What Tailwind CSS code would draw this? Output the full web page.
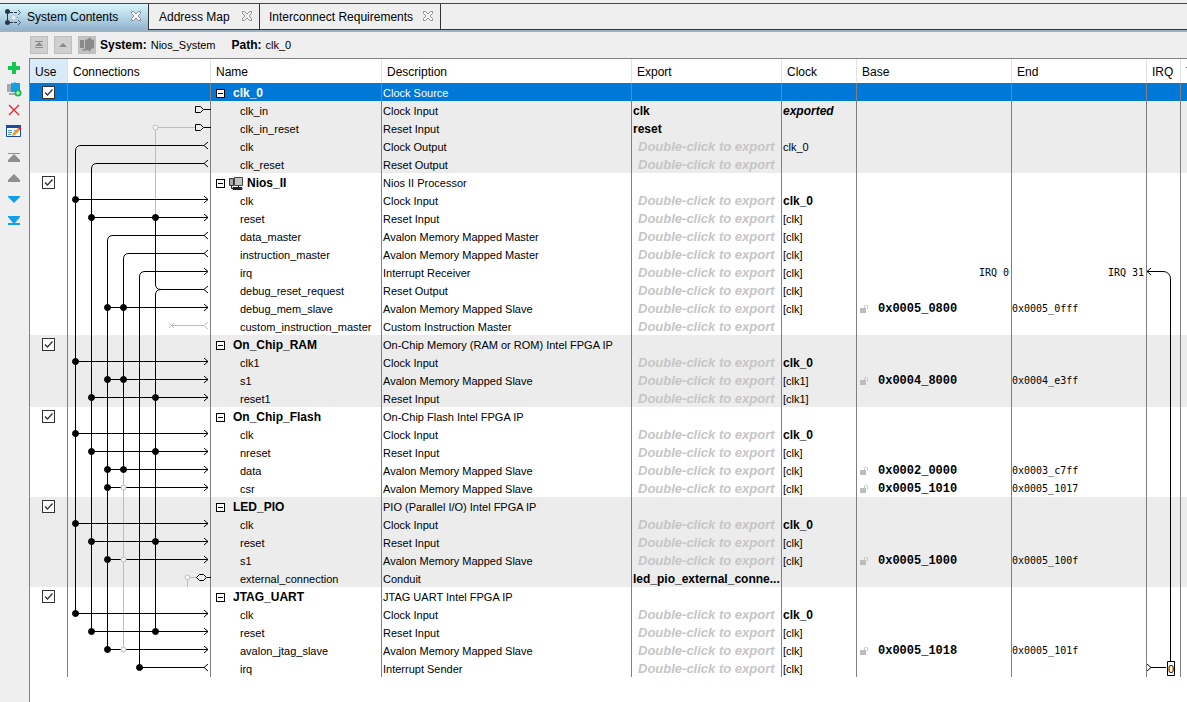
<!DOCTYPE html>
<html lang="en">
<head>
    <meta charset="UTF-8">
    <meta name="viewport" content="width=device-width, initial-scale=1.0">
    <title>System Contents - Nios_System</title>
    <script src="https://cdn.jsdelivr.net/npm/@tailwindcss/browser@4"></script>
</head>
<body class="min-h-screen flex flex-col bg-[#efefef] text-black text-xs font-['Liberation_Sans',sans-serif]">

    <!-- Shared icons -->
    <svg class="hidden">
        <symbol id="close" viewBox="0 0 12 12">
            <path d="M1.500 1.500h2L6 4l2.500-2.500h2v2L8 6l2.500 2.500v2h-2L6 8l-2.500 2.500h-2v-2L4 6 1.500 3.500z" fill="#f6f6f6" stroke="#7a7a7a" stroke-width=".8"/>
        </symbol>
        <symbol id="chip" viewBox="0 0 14 14">
            <path d="M.5 2.500h4v7h-4z" fill="#aaa" stroke="#333"/>
            <path d="M5.500 1.500h8v8h-8z" fill="#c4c4c4" stroke="#444"/>
            <path d="M2.500 10v2.500h10M9.500 10v2M4 11.500h9v2H4z" fill="#ddd" stroke="#222"/>
        </symbol>
        <symbol id="lock" viewBox="0 0 9 9">
            <path d="M0 3h6v5H0z" fill="#bdbdbd"/>
            <path d="M4.500 3V1.500a1.500 1.500 0 0 1 3 0V4" fill="none" stroke="#c4c4c4"/>
        </symbol>
    </svg>

    <!-- Tabs -->
    <nav class="pt-[3px] border-b-2 border-[#9bb3c6] whitespace-nowrap">
        <div class="flex h-[27px] border-t border-[#444]">
            <button class="flex items-center w-[148px] pl-1 pr-1.5 rounded-tr-sm bg-linear-to-b from-[#d9f6fb] via-[#b4d6e8] to-[#93b2cd]">
                <svg class="mr-1 shrink-0" width="19" height="18" viewBox="0 0 19 18">
                    <path d="M3.500 4v11" stroke="#26384c"/>
                    <path d="M6 4.500h8M6 14.500h8" stroke="#26384c" fill="none" stroke-dasharray="3 1"/>
                    <circle cx="3.500" cy="3.500" r="2.500" fill="#26384c"/><circle cx="3.500" cy="14.500" r="2.500" fill="#26384c"/>
                    <path d="M6 9.500h10" stroke="#9cb6c6" stroke-dasharray="2 1"/>
                    <circle cx="9.500" cy="9.500" r="2.500" fill="#eef5f9" stroke="#b4cad6"/>
                    <path d="M14 2l2.500 2.500-2.500 2.500M14 12l2.500 2.500-2.500 2.500" stroke="#42566a" fill="none"/>
                </svg>
                System Contents
                <svg class="ml-auto mb-0.5" width="12" height="12"><use href="#close"/></svg>
            </button>
            <button class="flex items-center w-[111px] pl-2.5 pr-1.5 border-l border-b border-[#333]">
                Address Map
                <svg class="ml-auto mb-0.5" width="12" height="12"><use href="#close"/></svg>
            </button>
            <button class="flex items-center w-[182px] pl-[9px] pr-1.5 border-x border-b border-[#333]">
                Interconnect Requirements
                <svg class="ml-auto mb-0.5" width="12" height="12"><use href="#close"/></svg>
            </button>
            <div class="flex-1 border-b border-[#333]"></div>
        </div>
    </nav>

    <!-- Path bar -->
    <div class="flex items-center h-[26px] pl-[30px]">
        <button aria-label="Top" class="size-[18px] mr-1.5 grid place-items-center bg-[#cfcfcf] border border-[#bdbdbd]">
            <svg width="8" height="8"><path d="M0 .5h8" stroke="#8c8c8c"/><path d="M4 1l4 4H0z" fill="#8c8c8c"/><path d="M0 6.500h8" stroke="#8c8c8c"/></svg>
        </button>
        <button aria-label="Up" class="size-[18px] mr-1.5 grid place-items-center bg-[#cfcfcf] border border-[#bdbdbd]">
            <svg width="8" height="8"><path d="M4 2l4 4H0z" fill="#8c8c8c"/></svg>
        </button>
        <button aria-label="Down" class="size-[18px] mr-1 grid place-items-center bg-[#c4c4c4] border border-[#bdbdbd]">
            <svg width="16" height="16"><path d="M1 3h4v8H1zM6 3l3-1 2-2 1 2 3 1v8l-3 1-1 3-2-2-5 1-1-2h3z" fill="#8a8a8a"/></svg>
        </button>
        <b class="mr-1">System:</b><span class="mr-4 text-[11px]">Nios_System</span>
        <b class="mr-1">Path:</b><span class="text-[11px]">clk_0</span>
    </div>

    <div class="flex flex-1">
        <!-- Side tools -->
        <aside class="w-[29px] flex flex-col items-center gap-[5px] pt-0.5 pr-px">
            <button aria-label="Add"><svg width="16" height="16"><path d="M6 2h4v4h4v4h-4v4H6v-4H2V6h4z" fill="#12c850"/></svg></button>
            <button aria-label="Duplicate"><svg width="16" height="16"><path d="M1 3h5v8H1z" fill="#a9a9a9"/><path d="M5 1.500l2 1 1.500-1.500 1.500 1h4v9H5z" fill="#129fe6"/><path d="M3 12h7v2H3z" fill="#a9a9a9"/><circle cx="12" cy="12" r="3.500" fill="#12b850"/><path d="M12 10v4M10 12h4" stroke="#fff"/></svg></button>
            <button aria-label="Remove"><svg width="16" height="16"><path d="M3 3l10 10M13 3L3 13" stroke="#e02434" stroke-width="1.300"/></svg></button>
            <button aria-label="Edit"><svg width="16" height="16"><path d="M.5 2.500h14v11H.5z" fill="#fff" stroke="#1c4a9c"/><path d="M0 2h15v3H0z" fill="#1c4a9c"/><path d="M2 7.500h4M2 9.500h4M2 11.500h3M8 7.500h4" stroke="#4aa0dc"/><path d="M6 13l1-3 5-5 2 2-5 5z" fill="#f29a1f"/><path d="M12 5l1.500-1.500 2 2L14 7z" fill="#e02434"/></svg></button>
            <button aria-label="Move to top" class="mt-1.5"><svg width="16" height="16"><path d="M2 3h12v1H2zM8 4l6 6v2H2v-2z" fill="#8f8f8f"/></svg></button>
            <button aria-label="Move up"><svg width="16" height="16"><path d="M8 3l6 6v2H2V9z" fill="#8f8f8f"/></svg></button>
            <button aria-label="Move down"><svg width="16" height="16"><path d="M2 4h12v1L8 11 2 5z" fill="#12a0ea"/></svg></button>
            <button aria-label="Move to bottom"><svg width="16" height="16"><path d="M2 3h12v1L9 10h5v2H2v-2h5L2 4z" fill="#12a0ea"/></svg></button>
        </aside>

        <main class="flex-1 min-w-0 bg-white border-l border-t border-[#828282]">
            <table class="w-full table-fixed border-separate border-spacing-0 whitespace-nowrap">
                <colgroup>
                    <col class="w-[37px]"><col class="w-[143px]"><col class="w-[171px]"><col class="w-[250px]"><col class="w-[150px]">
                    <col class="w-[75px]"><col class="w-[155px]"><col class="w-[135px]"><col class="w-[34px]"><col>
                </colgroup>
                <thead>
                    <tr class="h-6 text-left *:font-normal *:p-0 *:pt-0.5 *:pl-[5px] *:not-first:border-l *:border-[#e2e2e2]">
                        <th class="bg-[#d9ebf9]">Use</th><th>Connections</th><th>Name</th><th>Description</th><th>Export</th>
                        <th>Clock</th><th>Base</th><th>End</th><th>IRQ</th><th class="overflow-hidden">Type</th>
                    </tr>
                </thead>
                <tbody id="rows" class="text-[11px]"></tbody>
            </table>
        </main>
    </div>

    <template id="wires">
        <svg class="absolute top-0 -left-px z-10 pointer-events-none" width="144" height="594" fill="none" stroke="#000">
            <!-- unused connections -->
            <g stroke="#bdbdbd">
                <path d="M88.500 44.500V134M88.500 44.500H128M56.500 386V566M120.500 494.500H130M120.500 494.500V504M104.500 242.500H137"/>
                <path d="M102 240l5 5M107 240l-5 5M141 239l-4 3.500 4 3.500"/>
            </g>
            <!-- buses -->
            <path d="M137 62.500H14q-5.500 0-5.500 5.500V530.500"/>
            <path d="M137 80.500H30q-5.500 0-5.500 5.500V548.500"/>
            <path d="M137 152.500H46q-5.500 0-5.500 5.500V566.500"/>
            <path d="M137 170.500H62q-5.500 0-5.500 5.500V386.500"/>
            <path d="M140 188.500H78q-5.500 0-5.500 5.500V584.500H137"/>
            <path d="M88.500 134.500V201q0 5.500 5.500 5.500H137M94 206.500q-5.500 0-5.500 5.500V548.500"/>
            <g id="links"></g>
            <!-- exported ends -->
            <path d="M128.500 23.500h5l3 3-3 3h-5zM137 26.500h7M128.500 41.500h5l3 3-3 3h-5zM137 44.500h7"/>
            <path d="M129.500 494.500l3-3h4l3 3-3 3h-4zM140 494.500h4"/>
        </svg>
    </template>

    <template id="irq-wire">
        <svg class="absolute top-0 -left-px z-10" width="34" height="594" fill="none" stroke="#000">
            <path d="M1 188.500H18q6 1 6.500 7V578M5 185l-4 3.500 4 3.500M1 581l4 3.500-4 3.500M5 584.500H20"/>
            <path d="M21.500 578.500h7v14h-7z" fill="#fff"/>
            <text x="22" y="590" font-size="11" fill="#000" stroke="none">0</text>
        </svg>
    </template>

    <script>
        // port: name, description, export, clock, base, end
        // clock prefix: ! bold, * bold italic
        const HINT = 'Double-click to export';
        const groups = [
            ['clk_0', 'Clock Source', [
                ['clk_in', 'Clock Input', 'clk', '*exported'],
                ['clk_in_reset', 'Reset Input', 'reset'],
                ['clk', 'Clock Output', HINT, 'clk_0'],
                ['clk_reset', 'Reset Output', HINT]]],
            ['Nios_II', 'Nios II Processor', [
                ['clk', 'Clock Input', HINT, '!clk_0'],
                ['reset', 'Reset Input', HINT, '[clk]'],
                ['data_master', 'Avalon Memory Mapped Master', HINT, '[clk]'],
                ['instruction_master', 'Avalon Memory Mapped Master', HINT, '[clk]'],
                ['irq', 'Interrupt Receiver', HINT, '[clk]', 'IRQ 0', 'IRQ 31'],
                ['debug_reset_request', 'Reset Output', HINT, '[clk]'],
                ['debug_mem_slave', 'Avalon Memory Mapped Slave', HINT, '[clk]', '0x0005_0800', '0x0005_0fff'],
                ['custom_instruction_master', 'Custom Instruction Master', HINT]]],
            ['On_Chip_RAM', 'On-Chip Memory (RAM or ROM) Intel FPGA IP', [
                ['clk1', 'Clock Input', HINT, '!clk_0'],
                ['s1', 'Avalon Memory Mapped Slave', HINT, '[clk1]', '0x0004_8000', '0x0004_e3ff'],
                ['reset1', 'Reset Input', HINT, '[clk1]']]],
            ['On_Chip_Flash', 'On-Chip Flash Intel FPGA IP', [
                ['clk', 'Clock Input', HINT, '!clk_0'],
                ['nreset', 'Reset Input', HINT, '[clk]'],
                ['data', 'Avalon Memory Mapped Slave', HINT, '[clk]', '0x0002_0000', '0x0003_c7ff'],
                ['csr', 'Avalon Memory Mapped Slave', HINT, '[clk]', '0x0005_1010', '0x0005_1017']]],
            ['LED_PIO', 'PIO (Parallel I/O) Intel FPGA IP', [
                ['clk', 'Clock Input', HINT, '!clk_0'],
                ['reset', 'Reset Input', HINT, '[clk]'],
                ['s1', 'Avalon Memory Mapped Slave', HINT, '[clk]', '0x0005_1000', '0x0005_100f'],
                ['external_connection', 'Conduit', 'led_pio_external_conne...']]],
            ['JTAG_UART', 'JTAG UART Intel FPGA IP', [
                ['clk', 'Clock Input', HINT, '!clk_0'],
                ['reset', 'Reset Input', HINT, '[clk]'],
                ['avalon_jtag_slave', 'Avalon Memory Mapped Slave', HINT, '[clk]', '0x0005_1018', '0x0005_101f'],
                ['irq', 'Interrupt Sender', HINT, '[clk]']]],
        ];

        const bold = (v) => `<b class="block text-xs leading-4">${v}</b>`;

        function exportCell(v) {
            if (!v) return '';
            if (v === HINT) return `<span class="block leading-4 pl-[5px] text-[13px] font-bold italic text-[#c6c6c6]">${v}</span>`;
            return bold(v);
        }

        function clockCell(v) {
            if (!v) return '';
            if (v[0] === '*') return `<i>${bold(v.slice(1))}</i>`;
            if (v[0] === '!') return bold(v.slice(1));
            return v;
        }

        function baseCell(v) {
            if (!v) return '';
            if (v.startsWith('IRQ')) return `<div class="pr-0.5 text-right font-['DejaVu_Sans_Mono',monospace] text-[10px] leading-4">${v}</div>`;
            return `<div class="flex items-center gap-[9px] pl-0.5"><svg width="9" height="9"><use href="#lock"/></svg><b class="font-['Liberation_Mono',monospace] text-xs leading-4">${v}</b></div>`;
        }

        function endCell(v) {
            if (!v) return '';
            const align = v.startsWith('IRQ') ? 'pr-0.5 text-right' : '';
            return `<div class="${align} font-['DejaVu_Sans_Mono',monospace] text-[10px] leading-4">${v}</div>`;
        }

        const CELL = '*:p-0 *:pt-0.5 *:leading-4 *:border-[#808080] *:not-first:border-l';
        let html = '';
        groups.forEach(([name, desc, ports], g) => {
            const bg = g % 2 ? 'bg-white' : 'bg-[#ececec]';
            const head = g === 0 ? 'bg-[#0078d7] text-white' : bg;
            const chip = name === 'Nios_II' ? '<svg class="mr-1 -ml-1" width="14" height="14"><use href="#chip"/></svg>' : '';
            html += `<tr class="h-[18px] ${head} ${CELL}">
                <td class="pt-px!"><span class="grid w-[13px] ml-3">
                    <input type="checkbox" checked aria-label="Use ${name}" class="col-start-1 row-start-1 appearance-none size-[13px] bg-white border border-[#333]">
                    <svg class="col-start-1 row-start-1 pointer-events-none" width="13" height="13"><path d="M3 6.500l2.500 2.500L10.500 3.500" fill="none" stroke="#333" stroke-width="1.300"/></svg>
                </span></td>
                <td class="relative">${g === 0 ? document.getElementById('wires').innerHTML : ''}</td>
                <td><div class="flex items-center pl-[5px]"><button aria-label="Collapse" class="size-[9px] mr-2 bg-white border border-black grid place-items-center"><span class="w-[5px] h-px bg-black"></span></button>${chip}${bold(name)}</div></td>
                <td class="pl-px!">${desc}</td><td></td><td></td><td></td><td></td>
                <td class="relative">${g === 0 ? document.getElementById('irq-wire').innerHTML : ''}</td><td></td></tr>`;
            for (const [port, pdesc, exp, clock, base, end] of ports) {
                html += `<tr class="h-[18px] ${bg} ${CELL}"><td></td><td></td>
                    <td class="pl-[29px]!">${port}</td><td class="pl-px!">${pdesc}</td>
                    <td class="pl-px!">${exportCell(exp)}</td><td class="pl-px!">${clockCell(clock)}</td>
                    <td class="pl-px!">${baseCell(base)}</td><td>${endCell(end)}</td><td></td><td></td></tr>`;
            }
        });
        document.getElementById('rows').innerHTML = html;

        // row number, x of each connected bus, x of each open bus
        const links = [
            [6, [8]], [7, [24, 88]], [12, [40, 56]],
            [15, [8]], [16, [40, 56]], [17, [24, 88]],
            [19, [8]], [20, [24, 88]], [21, [40, 56]], [22, [40], [56]],
            [24, [8]], [25, [24, 88]], [26, [40], [56]],
            [29, [8]], [30, [24, 88]], [31, [40], [56]], [32, [72]],
        ];
        const mid = (row) => row * 18 + 8.5;
        let wires = '';
        const open = (x, y) => `<circle cx="${x + .5}" cy="${y}" r="2.500" fill="#f4f4f4" stroke="#bdbdbd"/>`;
        for (const [row, on, off = []] of links) {
            const y = mid(row);
            if (row !== 32) wires += `<path d="M${on[0]} ${y}H141"/>`;
            off.forEach(x => wires += open(x, y));
            on.forEach(x => wires += `<circle cx="${x + .5}" cy="${y}" r="3" fill="#000"/>`);
        }
        [6, 7, 10, 12, 15, 16, 17, 19, 20, 21, 22, 24, 25, 26, 29, 30, 31].forEach(r => wires += `<path d="M137 ${mid(r) - 3.5}l4 3.500-4 3.500"/>`);
        [3, 4, 8, 9, 11, 32].forEach(r => wires += `<path d="M141 ${mid(r) - 3.5}l-4 3.500 4 3.500"/>`);
        wires += open(88, mid(2)) + open(120, mid(27));
        document.getElementById('links').innerHTML = wires;
    </script>
</body>
</html>
